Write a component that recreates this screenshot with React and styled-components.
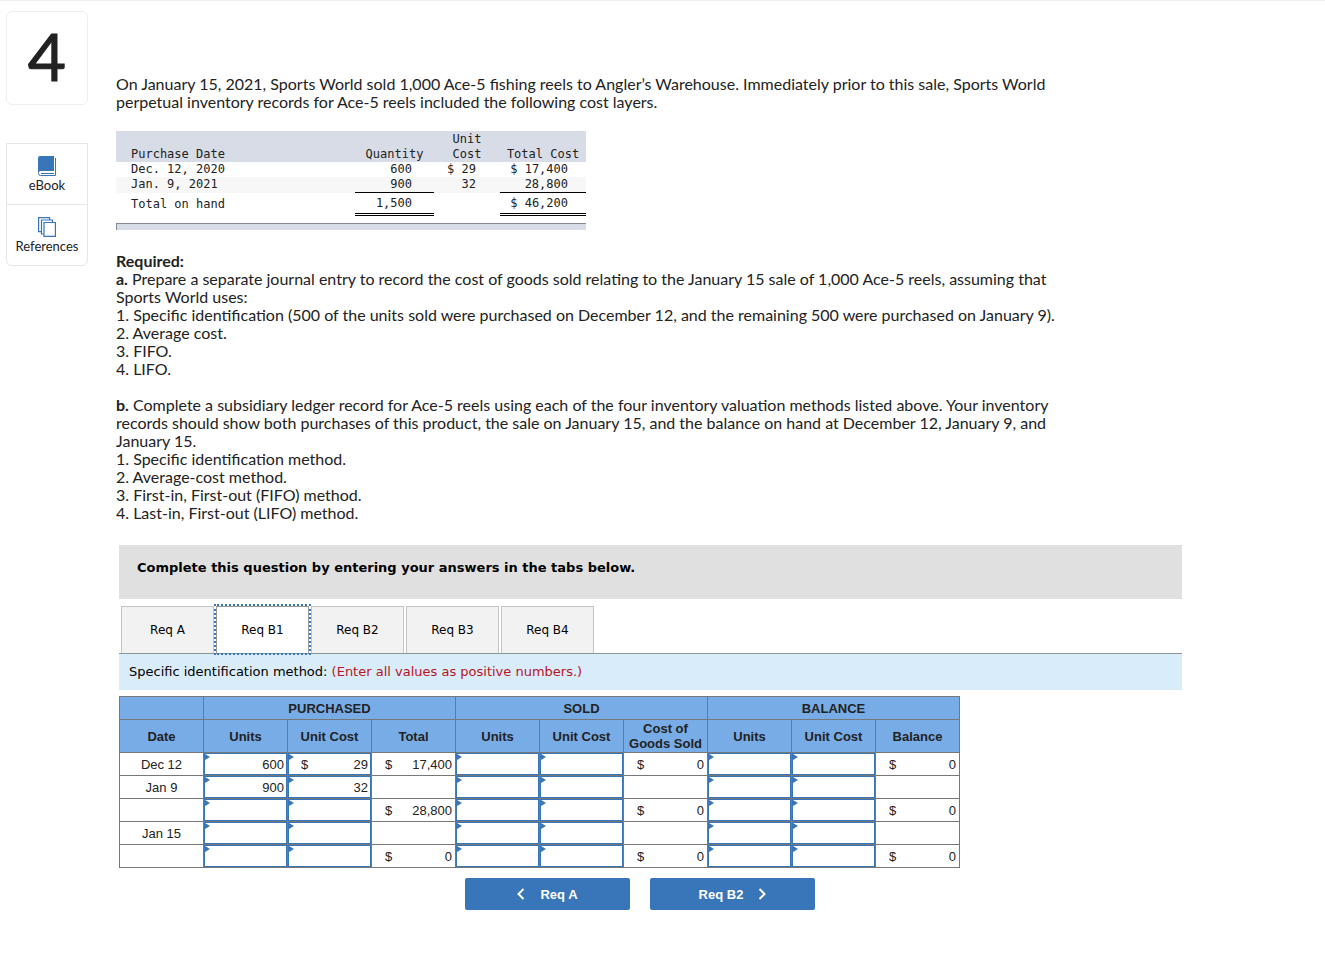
import React from 'react'
import styled, { createGlobalStyle } from 'styled-components'

const inventory = [
  { label: 'Dec. 12, 2020', qty: '600', cost: '$ 29', total: '$ 17,400' },
  { label: 'Jan. 9, 2021', qty: '900', cost: '32', total: '28,800' },
]

const tabs = ['Req A', 'Req B1', 'Req B2', 'Req B3', 'Req B4']

const groups = [
  { name: 'Purchased', columns: ['Units', 'Unit Cost', 'Total'] },
  { name: 'Sold', columns: ['Units', 'Unit Cost', 'Cost of Goods Sold'] },
  { name: 'Balance', columns: ['Units', 'Unit Cost', 'Balance'] },
]

const ledger = [
  { date: 'Dec 12', units: '600', cost: '29', money: true, totals: ['17,400', '0', '0'] },
  { date: 'Jan 9', units: '900', cost: '32', totals: [] },
  { date: '', units: '', cost: '', totals: ['28,800', '0', '0'] },
  { date: 'Jan 15', units: '', cost: '', totals: [] },
  { date: '', units: '', cost: '', totals: ['0', '0', '0'] },
]

const BookIcon = () => (
  <svg width="18" height="20" viewBox="0 0 18 20" fill="none" aria-hidden="true">
    <path d="M2 0h14v15H3a2 2 0 0 0-2 1L0 17V2a2 2 0 0 1 2-2z" fill="#3875b9" />
    <path d="M17.500 2v17.500H2.500a2 2 0 0 1-2-2v-1" stroke="#3875b9" />
    <path d="M3 17.500h13" stroke="#3875b9" />
  </svg>
)

const PagesIcon = () => (
  <svg width="18" height="20" viewBox="0 0 18 20" fill="#fff" stroke="#3875b9" strokeWidth="1.200" aria-hidden="true">
    <path d="M.6.6h11v14H.6z" />
    <path d="M3.500 3h11v14h-11z" />
    <path d="M6 5.500h11.400v13.900H6z" />
  </svg>
)

const Arrow = ({ next }) => (
  <svg width="8" height="12" viewBox="0 0 8 12" fill="none" stroke="#fff" strokeWidth="2" aria-hidden="true">
    <path d={next ? 'M1.500 1l5 5-5 5' : 'M6.500 1l-5 5 5 5'} />
  </svg>
)

const Entry = ({ label, value, money }) => (
  <EntryCell>
    <EntryBox>
      {money && <span>$</span>}
      <EntryInput aria-label={label} defaultValue={value} />
    </EntryBox>
  </EntryCell>
)

const App = () => {
  return (
    <>
      <GlobalStyle />
      <Page>
        <Sidebar>
          <QuestionNumber>4</QuestionNumber>
          <Resources>
            <ResourceLink href="#ebook"><BookIcon />eBook</ResourceLink>
            <ResourceLink href="#references"><PagesIcon />References</ResourceLink>
          </Resources>
        </Sidebar>
        <Main>
          <Prose>
            <p>
              On January 15, 2021, Sports World sold 1,000 Ace-5 fishing reels to Angler’s Warehouse. Immediately prior to this sale, Sports World<br />
              perpetual inventory records for Ace-5 reels included the following cost layers.
            </p>
          </Prose>
          <Inventory>
            <colgroup>
              <col width="239" /><col width="79" /><col width="66" /><col width="86" />
            </colgroup>
            <thead>
              <tr>
                <th className="name">Purchase Date</th>
                <th>Quantity</th>
                <th>Unit<br />Cost</th>
                <th>Total Cost</th>
              </tr>
            </thead>
            <tbody>
              {inventory.map((row) => (
                <tr key={row.label}>
                  <td className="name">{row.label}</td>
                  <td className="qty">{row.qty}</td>
                  <td className="cost">{row.cost}</td>
                  <td className="total">{row.total}</td>
                </tr>
              ))}
            </tbody>
            <tfoot>
              <tr>
                <td className="name">Total on hand</td>
                <td className="qty">1,500</td>
                <td></td>
                <td className="total">$ 46,200</td>
              </tr>
            </tfoot>
          </Inventory>
          <TableEnd />
          <Prose>
            <p>
              <b>Required:</b><br />
              <b>a.</b> Prepare a separate journal entry to record the cost of goods sold relating to the January 15 sale of 1,000 Ace-5 reels, assuming that<br />
              Sports World uses:<br />
              1. Specific identification (500 of the units sold were purchased on December 12, and the remaining 500 were purchased on January 9).<br />
              2. Average cost.<br />
              3. FIFO.<br />
              4. LIFO.
            </p>
            <p>
              <b>b.</b> Complete a subsidiary ledger record for Ace-5 reels using each of the four inventory valuation methods listed above. Your inventory<br />
              records should show both purchases of this product, the sale on January 15, and the balance on hand at December 12, January 9, and<br />
              January 15.<br />
              1. Specific identification method.<br />
              2. Average-cost method.<br />
              3. First-in, First-out (FIFO) method.<br />
              4. Last-in, First-out (LIFO) method.
            </p>
          </Prose>
          <Worksheet>
            <Banner>Complete this question by entering your answers in the tabs below.</Banner>
            <Tabs role="tablist">
              {tabs.map((tab) => (
                <Tab key={tab} role="tab" aria-selected={tab === 'Req B1'} $active={tab === 'Req B1'}>{tab}</Tab>
              ))}
            </Tabs>
            <Instruction>
              Specific identification method: <em>(Enter all values as positive numbers.)</em>
            </Instruction>
            <Ledger>
              <thead>
                <tr>
                  <th></th>
                  {groups.map((group) => (
                    <th key={group.name} colSpan="3">{group.name.toUpperCase()}</th>
                  ))}
                </tr>
                <tr className="columns">
                  <th>Date</th>
                  {groups.map((group) => group.columns.map((column) => (
                    <th key={group.name + column}>{column}</th>
                  )))}
                </tr>
              </thead>
              <tbody>
                {ledger.map((row, i) => (
                  <tr key={i}>
                    <td>{row.date}</td>
                    {groups.map((group, g) => (
                      <React.Fragment key={group.name}>
                        <Entry label={`${group.name} units, row ${i + 1}`} value={g === 0 ? row.units : ''} />
                        <Entry label={`${group.name} unit cost, row ${i + 1}`} value={g === 0 ? row.cost : ''} money={g === 0 && row.money} />
                        <td>
                          {row.totals[g] && <Money><span>$</span><span>{row.totals[g]}</span></Money>}
                        </td>
                      </React.Fragment>
                    ))}
                  </tr>
                ))}
              </tbody>
            </Ledger>
            <Pager>
              <PagerButton><Arrow />Req A</PagerButton>
              <PagerButton>Req B2<Arrow next /></PagerButton>
            </Pager>
          </Worksheet>
        </Main>
      </Page>
    </>
  )
}

export default App

const GlobalStyle = createGlobalStyle`
* {
  box-sizing: border-box;
}
body {
  margin: 0;
  background: #fff;
  color: #222;
  font-family: Lato, sans-serif;
}
`

const Page = styled.div`
display: flex;
align-items: flex-start;
gap: 28px;
padding: 10px 6px 48px;
border-top: 1px solid #eee;
`

const Sidebar = styled.aside`
flex: none;
width: 82px;
`

const QuestionNumber = styled.div`
display: grid;
place-items: center;
height: 94px;
padding-bottom: 4px;
border: 1px solid #eee;
border-radius: 6px;
font-size: 66px;
line-height: 80px;
-webkit-text-stroke: 1px #222;
`

const Resources = styled.nav`
margin-top: 38px;
border: 1px solid #e6e6e6;
border-radius: 0 0 6px 6px;
`

const ResourceLink = styled.a`
display: flex;
flex-direction: column;
align-items: center;
gap: 1px;
height: 60px;
padding-top: 12px;
color: #222;
font-size: 13px;
line-height: 16px;
text-decoration: none;

& + & {
  height: 61px;
  border-top: 1px solid #e6e6e6;
}
`

const Main = styled.main`
flex: 1;
min-width: 0;
padding-top: 64px;
`

const Prose = styled.div`
font-size: 16px;
line-height: 18px;

p {
  margin: 0;
}
p + p {
  margin-top: 18px;
}
`

const Inventory = styled.table`
width: 470px;
margin-top: 20px;
border-collapse: collapse;
table-layout: fixed;
font-family: 'DejaVu Sans Mono', monospace;
font-size: 12px;
line-height: 15px;

th, td {
  padding: 0;
  font-weight: normal;
}
thead {
  background: #d8dce6;
}
th {
  padding-top: 1px;
  vertical-align: bottom;
}
.name {
  padding-left: 15px;
  text-align: left;
}
.qty {
  padding-right: 22px;
  text-align: right;
}
.cost {
  padding-right: 24px;
  text-align: right;
}
.total {
  padding-right: 18px;
  text-align: right;
}
tbody tr + tr {
  background: #f7f7f7;
}
tbody tr + tr .qty, tbody tr + tr .total {
  border-bottom: 1px solid #000;
}
tfoot td {
  height: 22px;
}
tfoot .name {
  padding-top: 2px;
}
tfoot .qty, tfoot .total {
  border-bottom: 3px double #000;
}
`

const TableEnd = styled.div`
width: 470px;
height: 7px;
margin: 7px 0 22px;
border-top: 1px solid #858a96;
border-left: 1px solid #858a96;
background: #d8dce6;
`

const Worksheet = styled.section`
margin: 23px 137px 0 3px;
font-family: 'DejaVu Sans', sans-serif;
color: #000;
`

const Banner = styled.div`
height: 54px;
padding: 15px 18px;
background: #e0e0e0;
font-size: 13px;
font-weight: bold;
line-height: 16px;
`

const Tabs = styled.div`
display: flex;
gap: 2px;
margin-top: 7px;
padding-left: 2px;
border-bottom: 1px solid #8c9696;
`

const Tab = styled.button`
width: 93px;
height: 47px;
padding: 0;
border: 1px solid ${(props) => (props.$active ? '#999' : '#c4c4c4')};
border-bottom: 0;
background: ${(props) => (props.$active ? '#fff' : '#f2f2f2')};
color: #000;
font-family: inherit;
font-size: 12px;
outline: ${(props) => (props.$active ? '2px dotted #3875b9' : 'none')};
`

const Instruction = styled.div`
padding: 10px;
background: #d9ecf9;
font-size: 13px;
line-height: 16px;

em {
  color: #b8141f;
  font-style: normal;
}
`

const Ledger = styled.table`
width: 841px;
margin-top: 6px;
border-collapse: collapse;
table-layout: fixed;
color: #222;
font-family: 'Liberation Sans', sans-serif;
font-size: 13px;
line-height: 15px;

th, td {
  height: 23px;
  padding: 0;
  border: 1px solid #777;
  text-align: center;
}
th {
  background: #78ace6;
}
.columns th {
  height: 33px;
}
`

const EntryCell = styled.td`
position: relative;

&::before {
  content: '';
  position: absolute;
  top: 1px;
  left: 1px;
  border: solid transparent;
  border-width: 3px 0 3px 5px;
  border-left-color: #3875b9;
}
`

const EntryBox = styled.div`
display: flex;
align-items: center;
height: 22px;
padding: 0 2px 0 12px;
border: 1px solid #3875b9;
`

const EntryInput = styled.input`
flex: 1;
min-width: 0;
height: 20px;
padding: 0;
border: 0;
outline: 0;
background: transparent;
color: inherit;
font: inherit;
text-align: right;
`

const Money = styled.div`
display: flex;
justify-content: space-between;
padding: 0 3px 0 13px;
`

const Pager = styled.div`
display: flex;
gap: 20px;
margin-top: 10px;
padding-left: 346px;
`

const PagerButton = styled.button`
display: flex;
align-items: center;
justify-content: center;
gap: 15px;
width: 165px;
height: 32px;
border: 0;
border-radius: 2px;
background: #3875b9;
color: #fff;
font: bold 13px 'Liberation Sans', sans-serif;
`
